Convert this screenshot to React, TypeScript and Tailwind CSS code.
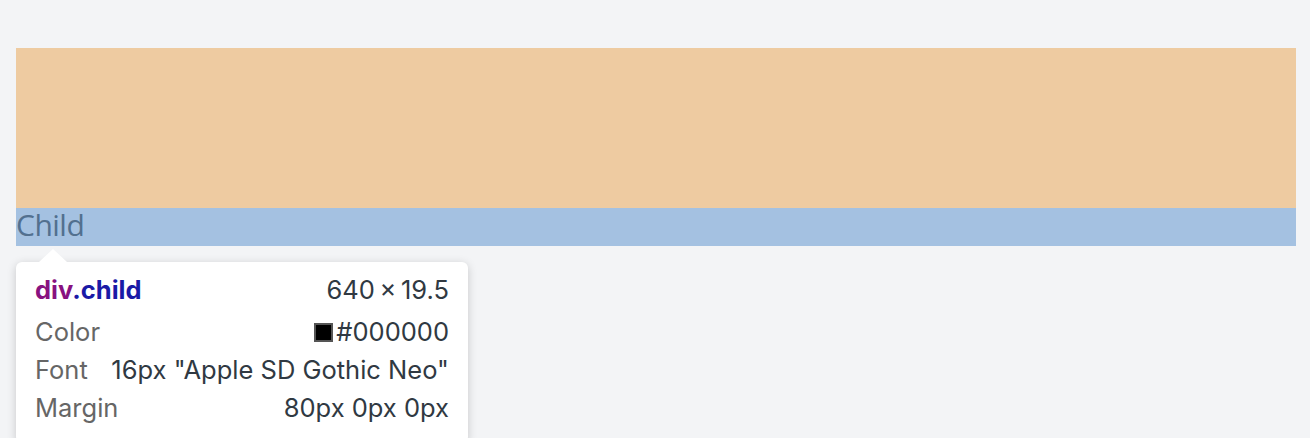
export default function App() {
  return (
    <div className="min-h-screen bg-[#f3f4f6] pt-12 pl-4 pr-[14px]">
      <div className="h-[160px] bg-[#eecba1]" />
      <div className="h-[38px] bg-[#a4c1e1] font-['Open_Sans',sans-serif] text-[30px] leading-[34px] tracking-[-0.5px] text-[#52708f]">
        Child
      </div>

      {/* inspector tooltip */}
      <div className="relative mt-4 w-[452px] rounded-md bg-white px-[19px] pt-[9px] pb-4 font-['Inter',sans-serif] text-[25.5px] shadow-[0_2px_10px_rgba(0,0,0,0.18)]">
        <div className="absolute -top-[13px] left-[23px] h-0 w-0 border-x-[14px] border-b-[13px] border-x-transparent border-b-white" />
        <div className="mb-1 flex h-[38px] items-center justify-between">
          <span className="font-bold">
            <span className="text-[#881280]">div</span>
            <span className="text-[#1a1aa6]">.child</span>
          </span>
          <span className="text-[#303942]">640&#8201;×&#8201;19.5</span>
        </div>
        <div className="flex h-[38px] items-center justify-between">
          <span className="text-[#666]">Color</span>
          <span className="flex items-center gap-[3px] text-[#303942]">
            <span className="inline-block h-[19px] w-[19px] border-2 border-[#555] bg-black" />
            #000000
          </span>
        </div>
        <div className="flex h-[38px] items-center justify-between">
          <span className="text-[#666]">Font</span>
          <span className="text-[#303942]">16px "Apple SD Gothic Neo"</span>
        </div>
        <div className="flex h-[38px] items-center justify-between">
          <span className="text-[#666]">Margin</span>
          <span className="text-[#303942]">80px 0px 0px</span>
        </div>
      </div>
    </div>
  );
}
